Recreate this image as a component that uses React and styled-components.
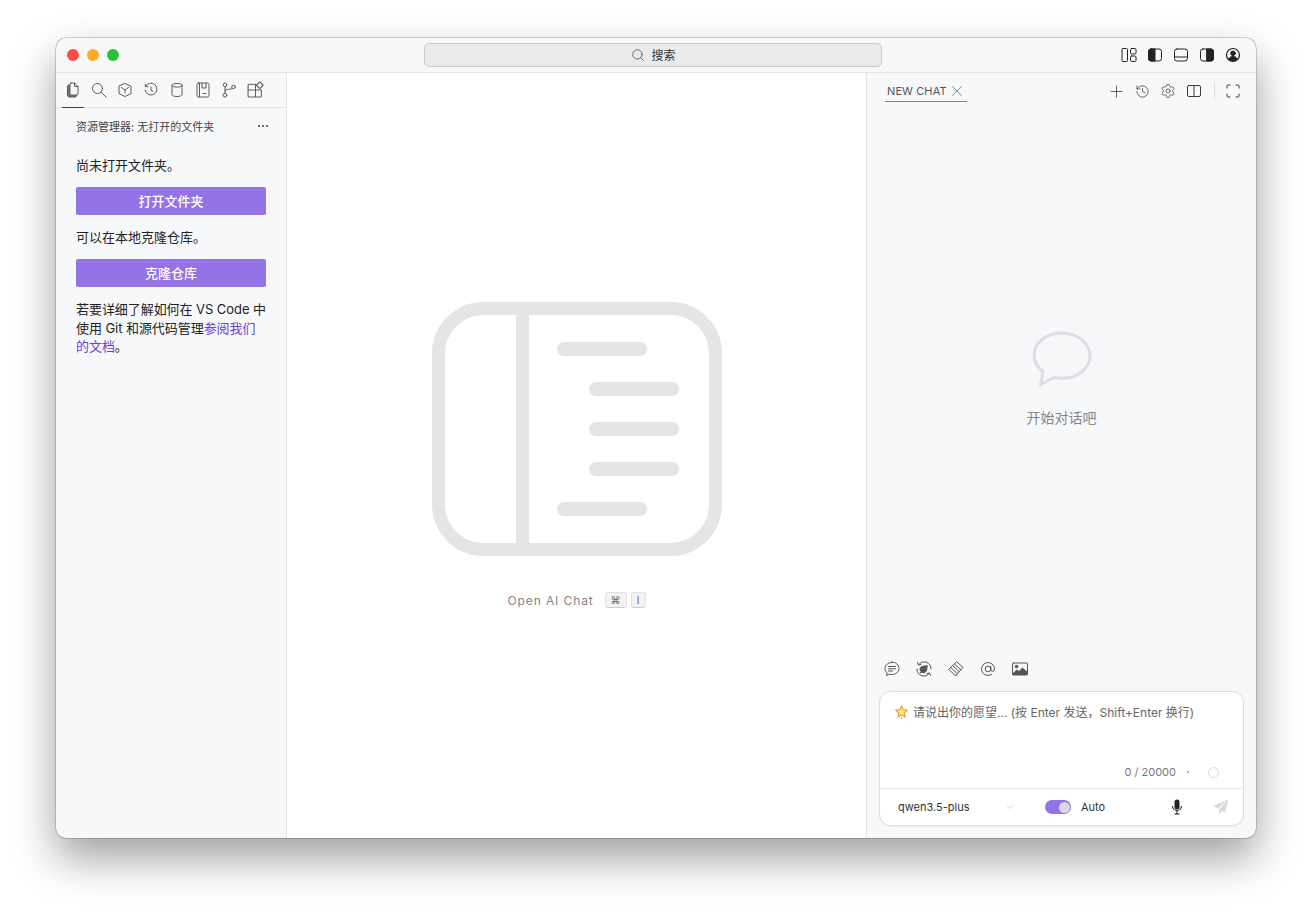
import styled, { createGlobalStyle } from "styled-components";
import { Search, Plus, History, Settings, X, ChevronDown } from "lucide-react";

const GlobalStyle = createGlobalStyle`
  html, body {
    margin: 0;
    padding: 0;
    background: #fff;
  }
  body {
    font-family: Inter, "Noto Sans CJK SC", sans-serif;
    color: #222;
  }
`;

const Page = styled.div`
  width: 1312px;
  height: 912px;
  padding: 38px 56px 74px;
  box-sizing: border-box;
  overflow: hidden;
`;

const Window = styled.div`
  width: 1200px;
  height: 800px;
  border-radius: 10px;
  background: #f7f8fa;
  display: flex;
  flex-direction: column;
  overflow: hidden;
  box-shadow: 0 0 0 0.5px rgba(0, 0, 0, 0.32), 0 20px 44px rgba(0, 0, 0, 0.38);
`;

const TitleBar = styled.div`
  height: 35px;
  flex: none;
  box-sizing: border-box;
  border-bottom: 1px solid #e3e4e6;
  display: grid;
  grid-template-columns: 357px 458px 1fr;
  align-items: center;
  padding: 0 15px 0 11px;
`;

const Lights = styled.div`
  display: flex;
  gap: 8px;
`;

const Light = styled.span`
  width: 12px;
  height: 12px;
  border-radius: 50%;
  background: ${(props) => props.color};
`;

const SearchBox = styled.div`
  height: 24px;
  box-sizing: border-box;
  background: #e9eaec;
  border: 1px solid #c8c9cb;
  border-radius: 5px;
  display: flex;
  align-items: center;
  justify-content: center;
  gap: 6px;
  padding: 0 0 1px 1px;
  font-size: 12px;
  color: #333;
`;

const TitleActions = styled.div`
  display: flex;
  justify-content: flex-end;
  align-items: center;
  gap: 10px;
`;

const Body = styled.div`
  flex: 1;
  display: flex;
  min-height: 0;
`;

const Sidebar = styled.aside`
  width: 231px;
  flex: none;
  box-sizing: border-box;
  border-right: 1px solid #e3e4e6;
  display: flex;
  flex-direction: column;
`;

const SideTabs = styled.div`
  height: 35px;
  flex: none;
  box-sizing: border-box;
  border-bottom: 1px solid #e3e4e6;
  display: flex;
  padding-left: 6px;
  gap: 4px;
`;

const SideTab = styled.div`
  width: 22px;
  height: 35px;
  box-sizing: border-box;
  display: flex;
  align-items: center;
  justify-content: center;
  padding-bottom: 1px;
  border-bottom: 1px solid ${(props) => (props.$active ? "#444" : "transparent")};
  color: #5c5c5c;
`;

const SideHead = styled.div`
  height: 36px;
  display: flex;
  align-items: center;
  justify-content: space-between;
  padding: 0 18px 0 20px;
  font-size: 11px;
  color: #444;
`;

const Dots = styled.span`
  display: flex;
  gap: 2px;
`;

const Dot = styled.i`
  width: 2px;
  height: 2px;
  border-radius: 50%;
  background: #444;
`;

const SideContent = styled.div`
  padding: 12px 20px 0;
  display: flex;
  flex-direction: column;
  gap: 13px;
  font-size: 13px;
  color: #222;
`;

const SideText = styled.p`
  margin: 0;
  line-height: 18px;
`;

const SideNote = styled.p`
  margin: 0;
  line-height: 18.5px;
  letter-spacing: -0.06px;
`;

const DocLink = styled.a`
  color: #6b42d6;
`;

const PrimaryButton = styled.button`
  height: 28px;
  border: 0;
  border-radius: 2px;
  padding: 0 0 2px;
  background: #9373e6;
  color: #fff;
  font: 500 13px Inter, "Noto Sans CJK SC", sans-serif;
`;

const Center = styled.main`
  flex: 1;
  background: #fff;
  display: flex;
  flex-direction: column;
  align-items: center;
  justify-content: center;
  gap: 35px;
`;

const ShortcutRow = styled.div`
  display: flex;
  align-items: center;
  font-size: 12px;
  letter-spacing: 0.9px;
  color: #85858a;
  height: 18px;
`;

const Key = styled.span`
  height: 16px;
  min-width: ${(props) => props.$width}px;
  box-sizing: border-box;
  margin-left: ${(props) => props.$gap}px;
  display: flex;
  align-items: center;
  justify-content: center;
  background: #f3f3f4;
  border: 1px solid #e2e2e4;
  border-bottom-color: #cfcfd2;
  border-radius: 3px;
  font-size: 10px;
  letter-spacing: 0;
  color: #666;
`;

const ChatPanel = styled.section`
  width: 390px;
  flex: none;
  box-sizing: border-box;
  border-left: 1px solid #e3e4e6;
  display: flex;
  flex-direction: column;
`;

const ChatHead = styled.div`
  height: 37px;
  flex: none;
  display: flex;
  align-items: flex-start;
  justify-content: space-between;
  padding: 0 10px 0 18px;
`;

const ChatTab = styled.div`
  width: 82px;
  height: 29px;
  box-sizing: border-box;
  display: flex;
  align-items: center;
  gap: 1px;
  padding: 7px 0 0 2px;
  border-bottom: 1px solid #8070d0;
  font-size: 11px;
  letter-spacing: 0.1px;
  white-space: nowrap;
  color: #555;

  svg {
    flex: none;
  }
`;

const ChatActions = styled.div`
  display: flex;
  align-items: center;
  height: 36px;
  color: #3c3c3c;
`;

const ChatAction = styled.span`
  width: 26px;
  display: flex;
  justify-content: center;
`;

const Divider = styled.span`
  width: 1px;
  height: 16px;
  background: #d8d9dc;
  margin: 0 5px 0 7px;
`;

const EmptyState = styled.div`
  flex: 1;
  display: flex;
  flex-direction: column;
  align-items: center;
  justify-content: center;
  gap: 20px;
  padding-bottom: 7px;
  font-size: 14px;
  color: #85858a;
`;

const ToolRow = styled.div`
  flex: none;
  height: 36px;
  box-sizing: border-box;
  display: flex;
  align-items: center;
  gap: 16px;
  padding: 0 0 8px 17px;
  color: #555;
`;

const Composer = styled.div`
  flex: none;
  height: 135px;
  margin: 0 12px 12px 12px;
  box-sizing: border-box;
  background: #fff;
  border: 1px solid #dcdde0;
  border-radius: 12px;
  display: flex;
  flex-direction: column;
  box-shadow: 0 1px 2px rgba(0, 0, 0, 0.05);
`;

const InputArea = styled.div`
  flex: 1;
  display: flex;
  flex-direction: column;
  justify-content: space-between;
  padding: 11px 24px 9px 14px;
  border-bottom: 1px solid #e6e7e9;
`;

const Placeholder = styled.div`
  display: flex;
  align-items: center;
  gap: 4px;
  font-size: 12px;
  color: #666;
  height: 17px;
`;

const CountRow = styled.div`
  display: flex;
  align-items: center;
  justify-content: flex-end;
  font-size: 11px;
  color: #777;
`;

const CountDot = styled.span`
  width: 2px;
  height: 2px;
  border-radius: 50%;
  background: #999;
  margin: 0 19px 0 11px;
`;

const Ring = styled.span`
  width: 11px;
  height: 11px;
  box-sizing: border-box;
  border: 1.5px solid #d9d4f3;
  border-radius: 50%;
`;

const ModelBar = styled.div`
  height: 36px;
  flex: none;
  display: flex;
  align-items: center;
  padding: 0 14px 0 18px;
  font-size: 11px;
  color: #333;
`;

const ModelName = styled.span`
  width: 106px;
`;

const Toggle = styled.span`
  width: 26px;
  height: 14px;
  margin-left: 29px;
  border-radius: 7px;
  background: #9373e6;
  display: flex;
  align-items: center;
  justify-content: flex-end;
  padding-right: 1px;
  box-sizing: border-box;
`;

const ToggleKnob = styled.span`
  width: 11px;
  height: 11px;
  border-radius: 50%;
  background: #d9d9de;
`;

const AutoLabel = styled.span`
  margin-left: 10px;
  flex: 1;
`;

const ModelIcons = styled.div`
  display: flex;
  align-items: center;
  gap: 30px;
`;

const StarSvg = styled.svg`
  flex: none;
`;

// ----- drawings -----

const Icon = ({ size = 16, children, ...rest }) => (
  <svg
    width={size}
    height={size}
    viewBox="0 0 16 16"
    fill="none"
    stroke="currentColor"
    strokeWidth="1"
    strokeLinecap="round"
    strokeLinejoin="round"
    {...rest}
  >
    {children}
  </svg>
);

const sideIcons = [
  <Icon key="files">
    <path d="M5 3H4a1.500 1.500 0 0 0-1.500 1.500v8.500A2 2 0 0 0 4.500 15H10a1.500 1.500 0 0 0 1.500-1.500" fill="#777" stroke="#555" />
    <path d="M6 1h3.500L13 4.500V12a1 1 0 0 1-1 1H6a1 1 0 0 1-1-1V2a1 1 0 0 1 1-1z" fill="#f7f8fa" />
    <path d="M9.500 1v3.500H13" />
  </Icon>,
  <Icon key="search">
    <circle cx="6.500" cy="6.500" r="5" />
    <path d="M10.200 10.200l5 5" />
  </Icon>,
  <Icon key="box">
    <path d="M8 1.500l6 2.800v7.400l-6 2.800-6-2.800V4.300z" />
    <path d="M4.500 5.500L8 8l3.500-2.500M8 8v3" />
  </Icon>,
  <Icon key="history">
    <path d="M2.500 4.500A6 6 0 1 1 2 8" />
    <path d="M2.300 2v2.700H5M8 5v3.300l2 1" />
  </Icon>,
  <Icon key="db">
    <ellipse cx="8" cy="3.300" rx="5" ry="1.800" />
    <path d="M3 3.300v9.400c0 1 2.200 1.800 5 1.800s5-.8 5-1.800V3.300" />
  </Icon>,
  <Icon key="notebook">
    <rect x="2" y="1" width="12" height="14" rx="1.500" />
    <path d="M4.500 1v14M7 1v5h4V1M8 11.500h3" />
  </Icon>,
  <Icon key="git">
    <circle cx="4" cy="2.800" r="1.800" />
    <circle cx="4" cy="13.200" r="1.800" />
    <circle cx="12.500" cy="5" r="1.800" />
    <path d="M4 4.600v6.800M4 9.500c0-1.500 1-2 3.500-2.200 2.500-.2 3.500-.4 3.800-1" />
  </Icon>,
  <Icon key="extensions" size={17}>
    <path d="M2 3h6v5.500h5.500V14a1 1 0 0 1-1 1H2a1 1 0 0 1-1-1V4a1 1 0 0 1 1-1zM1 8.500h7V15" />
    <path d="M12 .8l3.200 3.200-3.200 3.200L8.800 4z" />
  </Icon>,
];

const LayoutIcon = () => (
  <Icon size={16}>
    <rect x="1" y="1.500" width="5.500" height="13" rx="1" />
    <rect x="9.500" y="1.500" width="5.500" height="5.500" rx="1.200" />
    <rect x="9.500" y="9" width="5.500" height="5.500" rx="1.200" />
  </Icon>
);

const LeftPanelIcon = () => (
  <Icon size={16} color="#222">
    <rect x="1.500" y="2" width="13" height="12" rx="2.500" />
    <path d="M4 2h4v12H4a2.500 2.500 0 0 1-2.500-2.500v-7A2.500 2.500 0 0 1 4 2z" fill="#222" />
  </Icon>
);

const BottomPanelIcon = () => (
  <Icon size={16} color="#222">
    <rect x="1.500" y="2" width="13" height="12" rx="2.500" />
    <path d="M1.500 10h13" />
  </Icon>
);

const RightPanelIcon = () => (
  <Icon size={16} color="#222">
    <rect x="1.500" y="2" width="13" height="12" rx="2.500" />
    <path d="M8 2h4a2.500 2.500 0 0 1 2.500 2.500v7A2.500 2.500 0 0 1 12 14H8z" fill="#222" />
  </Icon>
);

const AccountIcon = () => (
  <Icon size={16} color="#222">
    <circle cx="8" cy="8" r="6.500" strokeWidth="1.200" />
    <circle cx="8" cy="6.300" r="2.300" fill="#222" />
    <path d="M3.800 12c.8-1.800 2.300-2.500 4.200-2.500s3.400.7 4.200 2.500A6 6 0 0 1 8 14a6 6 0 0 1-4.200-2z" fill="#222" />
  </Icon>
);

const SplitIcon = () => (
  <Icon size={16}>
    <rect x="1.500" y="2.500" width="13" height="11" rx="1.500" />
    <path d="M8 2.500v11" />
  </Icon>
);

const ExpandIcon = () => (
  <Icon size={16}>
    <path d="M2 5V3a1 1 0 0 1 1-1h2M11 2h2a1 1 0 0 1 1 1v2M14 11v2a1 1 0 0 1-1 1h-2M5 14H3a1 1 0 0 1-1-1v-2" />
  </Icon>
);

const AppMark = () => (
  <svg width="290" height="254" viewBox="0 0 290 254" fill="none">
    <rect x="6.500" y="6.500" width="277" height="241" rx="45" stroke="#e5e5e5" strokeWidth="13" />
    <rect x="84" y="6" width="13" height="242" fill="#e5e5e5" />
    <rect x="125" y="40" width="90" height="14" rx="7" fill="#e5e5e5" />
    <rect x="157" y="80" width="90" height="14" rx="7" fill="#e5e5e5" />
    <rect x="157" y="120" width="90" height="14" rx="7" fill="#e5e5e5" />
    <rect x="157" y="160" width="90" height="14" rx="7" fill="#e5e5e5" />
    <rect x="125" y="200" width="90" height="14" rx="7" fill="#e5e5e5" />
  </svg>
);

const BubbleMark = () => (
  <svg width="60" height="56" viewBox="0 0 60 56" fill="none">
    <path
      d="M30 2C15 2 2 11.500 2 24c0 6.500 3.500 12.500 9 16.500l-2.500 13 13.500-7c2.500.5 5.300.8 8 .8 15 0 28-9.500 28-22.300S45 2 30 2z"
      stroke="#dcdde6"
      strokeWidth="3"
      strokeLinejoin="round"
    />
  </svg>
);

const CommentIcon = () => (
  <Icon>
    <path d="M8 1.500c-3.900 0-7 2.700-7 6 0 1.700.8 3.200 2.100 4.300L2.500 14.500l3-1.300c.8.200 1.600.3 2.500.3 3.900 0 7-2.700 7-6s-3.100-6.500-7-6.500z" />
    <path d="M4.500 5.500h7M4.500 7.800h7M4.500 10h4" />
  </Icon>
);

const SyncIcon = () => (
  <Icon>
    <path d="M2.500 3.500A7 7 0 0 1 15 8M13.500 12.500A7 7 0 0 1 1 8" />
    <path d="M1.500 1.500l1 2.500 2.500-.5M14.500 14.500l-1-2.500-2.500.5" />
    <path d="M11 4.800L6.500 5.300a3 3 0 0 0-1.500 5.200l-1 1.500 1.800-.8A3 3 0 0 0 10.500 9.500z" fill="currentColor" />
  </Icon>
);

const AttachIcon = () => (
  <Icon>
    <path d="M9 1l6 5.500-5.500 6-1 2-2-.5L1 8.500z" />
    <path d="M6.800 3.200l6 5.500M5 5l6 5.500M3 6.800l6 5.500" />
  </Icon>
);

const ImageIcon = () => (
  <Icon>
    <rect x="0.500" y="2" width="15" height="12" rx="1" />
    <circle cx="4.500" cy="5.500" r="1.300" fill="currentColor" />
    <path d="M1 12.500l4-3.500 2 1.500 3.500-3.500 4.500 4v2.500H1z" fill="currentColor" />
  </Icon>
);

const AtIcon = () => (
  <Icon>
    <circle cx="8" cy="8" r="2.800" />
    <path d="M10.800 5.200v3.700c0 2 3.700 2 3.700-1A6.500 6.500 0 1 0 11.500 13.500" />
  </Icon>
);

const StarIcon = () => (
  <StarSvg width="15" height="15" viewBox="0 0 15 15">
    <path d="M7.500 1l2 4.300 4.900.5-3.600 3.300 1 4.800-4.300-2.500-4.300 2.500 1-4.800L.6 5.800l4.900-.5z" fill="#f4932a" />
    <path d="M7.500 3.300l1.300 3 3.200.3-2.400 2.100.7 3.100-2.800-1.600-2.800 1.600.7-3.100L3 6.600l3.200-.3z" fill="#fde98f" />
    <path d="M7.500 15v-1.500" stroke="#e8553a" strokeWidth="1" />
  </StarSvg>
);

const MicIcon = () => (
  <svg width="12" height="16" viewBox="0 0 12 16" fill="none">
    <rect x="3.500" y="0.500" width="5" height="10" rx="2.500" fill="#222" />
    <path d="M1.500 7a4.500 4.500 0 0 0 9 0M6 11.500V15M3.500 15h5" stroke="#222" strokeWidth="1.100" />
  </svg>
);

const SendIcon = () => (
  <svg width="16" height="16" viewBox="0 0 16 16">
    <path d="M15.500 .5L.5 7l4.500 2.500zM15.500 .5L6 10.500v5l2.800-3.500 3.200 1.800z" fill="#d8d8da" />
  </svg>
);

export default function App() {
  return (
    <Page>
      <GlobalStyle />
      <Window>
        <TitleBar>
          <Lights>
            <Light color="#fc4c47" />
            <Light color="#fdad23" />
            <Light color="#27c23a" />
          </Lights>
          <SearchBox>
            <Search size={14} strokeWidth={1.3} color="#444" />
            搜索
          </SearchBox>
          <TitleActions>
            <LayoutIcon />
            <LeftPanelIcon />
            <BottomPanelIcon />
            <RightPanelIcon />
            <AccountIcon />
          </TitleActions>
        </TitleBar>
        <Body>
          <Sidebar>
            <SideTabs>
              {sideIcons.map((icon, index) => (
                <SideTab key={index} $active={index === 0}>
                  {icon}
                </SideTab>
              ))}
            </SideTabs>
            <SideHead>
              资源管理器: 无打开的文件夹
              <Dots><Dot /><Dot /><Dot /></Dots>
            </SideHead>
            <SideContent>
              <SideText>尚未打开文件夹。</SideText>
              <PrimaryButton>打开文件夹</PrimaryButton>
              <SideText>可以在本地克隆仓库。</SideText>
              <PrimaryButton>克隆仓库</PrimaryButton>
              <SideNote>
                若要详细了解如何在 VS Code 中使用 Git 和源代码管理
                <DocLink>参阅我们的文档</DocLink>。
              </SideNote>
            </SideContent>
          </Sidebar>
          <Center>
            <AppMark />
            <ShortcutRow>
              Open AI Chat
              <Key $width={22} $gap={11}>⌘</Key>
              <Key $width={15} $gap={4}>I</Key>
            </ShortcutRow>
          </Center>
          <ChatPanel>
            <ChatHead>
              <ChatTab>
                NEW CHAT
                <X size={18} strokeWidth={0.9} />
              </ChatTab>
              <ChatActions>
                <ChatAction><Plus size={19} strokeWidth={1} /></ChatAction>
                <ChatAction><History size={15} strokeWidth={1.2} /></ChatAction>
                <ChatAction><Settings size={16} strokeWidth={1.1} /></ChatAction>
                <ChatAction><SplitIcon /></ChatAction>
                <Divider />
                <ChatAction><ExpandIcon /></ChatAction>
              </ChatActions>
            </ChatHead>
            <EmptyState>
              <BubbleMark />
              开始对话吧
            </EmptyState>
            <ToolRow>
              <CommentIcon />
              <SyncIcon />
              <AttachIcon />
              <AtIcon />
              <ImageIcon />
            </ToolRow>
            <Composer>
              <InputArea>
                <Placeholder>
                  <StarIcon />
                  请说出你的愿望... (按 Enter 发送，Shift+Enter 换行)
                </Placeholder>
                <CountRow>
                  0 / 20000
                  <CountDot />
                  <Ring />
                </CountRow>
              </InputArea>
              <ModelBar>
                <ModelName>qwen3.5-plus</ModelName>
                <ChevronDown size={12} strokeWidth={1} color="#aaa" />
                <Toggle><ToggleKnob /></Toggle>
                <AutoLabel>Auto</AutoLabel>
                <ModelIcons>
                  <MicIcon />
                  <SendIcon />
                </ModelIcons>
              </ModelBar>
            </Composer>
          </ChatPanel>
        </Body>
      </Window>
    </Page>
  );
}
